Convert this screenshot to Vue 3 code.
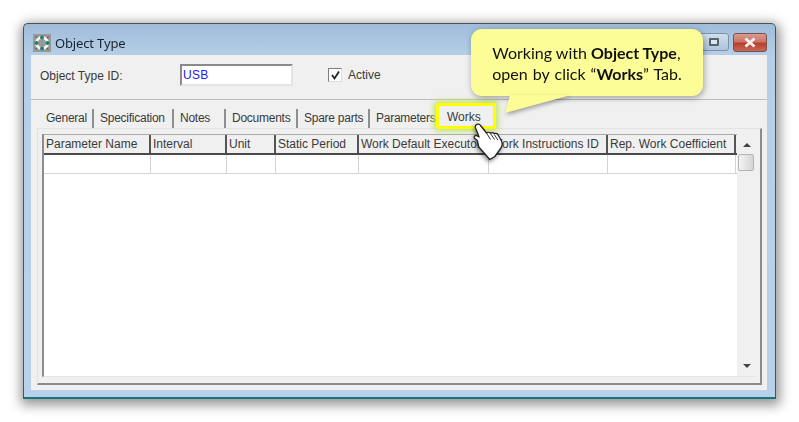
<script setup>
const tabs = [
  { label: 'General', width: 54 },
  { label: 'Specification', width: 80 },
  { label: 'Notes', width: 52 },
  { label: 'Documents', width: 72 },
  { label: 'Spare parts', width: 72 },
  { label: 'Parameters', width: 66 },
]
const columns = [
  { label: 'Parameter Name', width: 107 },
  { label: 'Interval', width: 76 },
  { label: 'Unit', width: 49 },
  { label: 'Static Period', width: 83 },
  { label: 'Work Default Executor', width: 130 },
  { label: 'Work Instructions ID', width: 119 },
  { label: 'Rep. Work Coefficient', width: 128 },
]
</script>

<template>
  <div class="stage">
    <div class="window">
      <div class="titlebar">
        <svg class="app-icon" width="18" height="18" viewBox="0 0 18 18">
          <rect width="18" height="18" fill="#9a9a94" />
          <path d="M2 2l3 1-1 2zM16 2l-1 3-2-1zM2 16l1-3 2 1zM16 16l-3-1 1-2z" fill="#55605e" />
          <circle cx="9" cy="9" r="5.500" fill="none" stroke="#f2f4f2" stroke-width="3" />
          <circle cx="9" cy="3.500" r="2" fill="#1f7f78" />
          <circle cx="14.500" cy="9" r="2" fill="#1f7f78" />
          <circle cx="9" cy="14.500" r="2" fill="#1f7f78" />
          <circle cx="3.500" cy="9" r="2" fill="#1f7f78" />
        </svg>
        <span class="title">Object Type</span>
        <div class="controls">
          <div class="restore"><span class="restore-box"></span></div>
          <div class="close">
            <svg width="16" height="11" viewBox="0 0 16 11">
              <path d="M3.500 1.500l9 8M12.500 1.500l-9 8" stroke="#f4f0ee" stroke-width="2.800" />
            </svg>
          </div>
        </div>
      </div>

      <div class="form">
        <div class="id-row">
          <label class="id-label">Object Type ID:</label>
          <div class="id-input">USB</div>
          <span class="checkbox">
            <svg width="11" height="11" viewBox="0 0 11 11">
              <path d="M2 5l2.500 3.500L9 1.500" fill="none" stroke="#222" stroke-width="1.800" />
            </svg>
          </span>
          <span class="active">Active</span>
        </div>

        <div class="tab-area">
          <div class="tabs">
            <div v-for="tab in tabs" :key="tab.label" class="tab" :style="{ width: tab.width + 'px' }">{{ tab.label }}</div>
            <div class="tab tab-works">Works</div>
          </div>
          <div class="panel">
            <div class="grid-wrap">
              <div class="grid">
                <div class="grid-head">
                  <div v-for="col in columns" :key="col.label" class="head-cell" :style="{ width: col.width + 'px' }">{{ col.label }}</div>
                </div>
                <div class="grid-row">
                  <div v-for="col in columns" :key="col.label" class="row-cell" :style="{ width: col.width + 'px' }"></div>
                </div>
              </div>
              <div class="scrollbar">
                <span class="arrow-up"></span>
                <span class="thumb"></span>
                <span class="spacer"></span>
                <span class="arrow-down"></span>
              </div>
            </div>
          </div>
        </div>
      </div>
    </div>

    <div class="callout">
      <svg class="callout-tail" width="70" height="20" viewBox="0 0 70 20">
        <path d="M5 0L0 18 66 0z" fill="#fdfd97" />
      </svg>
      <div class="callout-text">
        <div>Working with <b>Object Type</b>,</div>
        <div class="line-two">open by click “<b>Works</b>” Tab.</div>
      </div>
    </div>

    <svg class="cursor" width="36" height="40" viewBox="0 0 36 40">
      <path d="M4 3c1.500-1.500 3.500-1 4.500.5l6 7.500c1-1 3-.8 4 .2 1-.7 2.800-.6 3.800.5 1-.5 2.700-.3 3.500.8l3.500 6c1.500 3 1 6-1 8.500l-5.500 7.500-5 3-11-12.500-1.500-6.500-3-2.500c-.5-1.500.5-2.500 2-2.500l2.800 1.500L4 7c-.8-1.500-1-3 0-4z" fill="#fff" stroke="#222" stroke-width="1.300" stroke-linejoin="round" />
      <path d="M14.500 11l4 6.500M18.500 11.500l4 6M22.300 12.500l3.500 5.500" fill="none" stroke="#333" stroke-width="1" />
    </svg>
  </div>
</template>

<style>
body { background: #fff; overflow: hidden; }
</style>

<style scoped>
.stage {
  position: relative;
  width: 799px;
  height: 422px;
  padding: 23px 0 0 23px;
  box-sizing: border-box;
  background: #fff;
  overflow: hidden;
  font-family: "Liberation Sans", Arial, sans-serif;
}
.window {
  width: 753px;
  height: 376px;
  box-sizing: border-box;
  display: flex;
  flex-direction: column;
  border: 1px solid #4a5258;
  border-bottom: 2px solid #17737c;
  border-right-color: #2b5f68;
  border-radius: 5px 5px 0 0;
  background: linear-gradient(180deg, #9fbcd9 0, #b6cfe8 32px, #b8d2ec 100%);
  box-shadow: 1px 3px 12px 3px rgba(0, 0, 0, .42);
  padding: 0 8px 7px 7px;
  filter: blur(.45px);
}
.titlebar {
  height: 31px;
  flex: none;
  display: flex;
  align-items: center;
  position: relative;
}
.app-icon { margin: 6px 0 0 2px; flex: none; }
.title {
  margin: 7px 0 0 4px;
  font-family: "Noto Sans", sans-serif;
  font-size: 13px;
  letter-spacing: -.15px;
  color: #1b2530;
}
.controls {
  position: absolute;
  right: 0;
  top: 9px;
  display: flex;
  gap: 4px;
}
.restore {
  width: 30px;
  height: 18px;
  box-sizing: border-box;
  border: 1px solid #7f93a8;
  border-radius: 3px;
  background: linear-gradient(180deg, #cfdeed, #aec5dc);
  display: flex;
  align-items: center;
  justify-content: center;
}
.restore-box {
  width: 6px;
  height: 4px;
  border: 2px solid #59636e;
  border-radius: 1px;
  background: #dde5ed;
}
.close {
  width: 34px;
  height: 19px;
  box-sizing: border-box;
  border: 1px solid #7e4f4a;
  border-radius: 3px;
  background: linear-gradient(180deg, #d89c90 0, #cc7565 45%, #b8402f 55%, #c46a58 100%);
  display: flex;
  align-items: center;
  justify-content: center;
}
.form {
  flex: 1;
  display: flex;
  flex-direction: column;
  background: #f0f0f0;
  min-height: 0;
}
.id-row {
  height: 45px;
  flex: none;
  box-sizing: border-box;
  border-bottom: 1px solid #bdbdbd;
  display: flex;
  align-items: center;
  padding: 0 0 4px 9px;
  font-size: 12px;
  color: #3a3a3a;
}
.id-label { width: 140px; padding-top: 2px; }
.id-input {
  width: 113px;
  height: 22px;
  box-sizing: border-box;
  background: #fff;
  border: 2px solid;
  border-color: #8a8a8a #e4e4e4 #e4e4e4 #8a8a8a;
  color: #2222e8;
  padding: 1px 0 0 1px;
  line-height: 16px;
  letter-spacing: .3px;
}
.checkbox {
  margin-left: 35px;
  width: 14px;
  height: 14px;
  box-sizing: border-box;
  border: 1px solid;
  border-color: #7c7c7c #ddd #ddd #7c7c7c;
  background: #fff;
  display: flex;
  align-items: center;
  justify-content: center;
}
.active { margin-left: 6px; }
.tab-area {
  flex: 1;
  min-height: 0;
  display: flex;
  flex-direction: column;
  padding: 9px 5px 5px 6px;
}
.tabs {
  height: 19px;
  flex: none;
  display: flex;
  padding-left: 3px;
  font-size: 12px;
  letter-spacing: -.25px;
  color: #3a3a3a;
}
.tab {
  box-sizing: border-box;
  height: 19px;
  line-height: 19px;
  padding-left: 6px;
  border-right: 2px solid #8f8f8f;
  white-space: nowrap;
}
.tab:nth-child(6) { border-right: 0; }
.tab-works {
  position: relative;
  top: -6px;
  width: 60px;
  height: 26px;
  line-height: 22px;
  padding-left: 8px;
  border: 3px solid #ffff00;
  border-radius: 3px;
  box-shadow: 0 0 5px 3px rgba(190, 225, 110, .8);
  letter-spacing: 0;
}
.panel {
  flex: 1;
  min-height: 0;
  box-sizing: border-box;
  border: 1px solid #e2e2e2;
  border-right: 2px solid #8c8c8c;
  border-bottom: 2px solid #8c8c8c;
  padding: 5px 4px 6px 4px;
  display: flex;
}
.grid-wrap {
  flex: 1;
  min-width: 0;
  display: flex;
  background: #fff;
  border-left: 2px solid #8c8c8c;
  border-bottom: 1px solid #e4e4e4;
}
.grid { flex: 1; min-width: 0; }
.grid-head {
  display: flex;
  height: 21px;
  box-sizing: border-box;
  background: #f0f0f0;
  border-top: 1px solid #aaa;
  border-bottom: 2px solid #4a4a4a;
}
.head-cell {
  box-sizing: border-box;
  border-right: 2px solid #555;
  font-size: 12px;
  line-height: 18px;
  padding-left: 2px;
  color: #3a3a3a;
  white-space: nowrap;
  overflow: hidden;
}
.grid-row {
  display: flex;
  height: 19px;
  box-sizing: border-box;
  border-bottom: 1px solid #d4d4d4;
}
.row-cell {
  box-sizing: border-box;
  border-right: 1px solid #d4d4d4;
}
.scrollbar {
  width: 19px;
  flex: none;
  display: flex;
  flex-direction: column;
  align-items: center;
  background: #f0f0f0;
  padding: 9px 0 8px;
  box-sizing: border-box;
}
.arrow-up {
  width: 0;
  height: 0;
  border: 4px solid transparent;
  border-top: 0;
  border-bottom-color: #444;
}
.thumb {
  margin: 7px 1px 0 0;
  width: 16px;
  height: 17px;
  box-sizing: border-box;
  border: 1px solid #b4b4b4;
  border-radius: 2px;
  background: linear-gradient(90deg, #f4f4f4, #d4d4d4);
}
.spacer { flex: 1; }
.arrow-down {
  width: 0;
  height: 0;
  border: 4px solid transparent;
  border-bottom: 0;
  border-top-color: #444;
}
.callout {
  position: absolute;
  left: 471px;
  top: 29px;
  width: 232px;
  height: 67px;
  box-sizing: border-box;
  background: #fdfd97;
  border-radius: 11px;
  box-shadow: 1px 2px 6px rgba(0, 0, 0, .34);
  display: flex;
  align-items: center;
  justify-content: center;
}
.callout-tail {
  position: absolute;
  left: 34px;
  top: 66px;
  filter: drop-shadow(1px 2px 2px rgba(0, 0, 0, .35));
}
.callout-text {
  position: relative;
  font-family: "Lato", sans-serif;
  font-size: 16px;
  line-height: 21px;
  color: #111;
  white-space: nowrap;
}
.line-two { word-spacing: 1px; }
.cursor {
  position: absolute;
  left: 472px;
  top: 122px;
  filter: drop-shadow(-1px 2px 2px rgba(0, 0, 0, .45));
}
</style>
